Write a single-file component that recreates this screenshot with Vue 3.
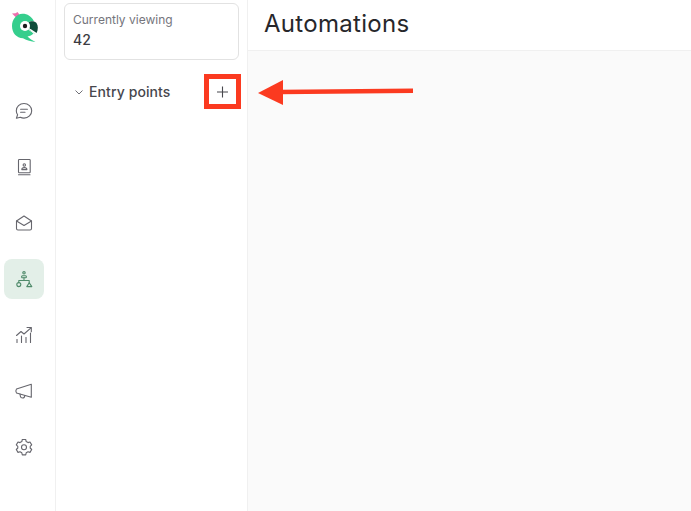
<template>
  <div class="page">
    <nav class="rail">
      <div class="logo">
        <svg width="30" height="32" viewBox="0 0 30 32">
          <path d="M3 2.5 L6.5 2.2 L8.5 1 L10 3 L11 5.5 L7 6.5 L5 4.6 Z" fill="#ee6fae" />
          <path d="M13.5 2.8 C7.5 2.8 3 8.5 3 15 C3 22 7.5 27 14 27.3 C18 29.5 22 30.8 26.5 31 C23.5 29.5 20.5 27.5 18.5 25.5 C21 25 23 24 24.5 22.5 L17 15 C18 11.5 21 9.8 24.8 10 C22.5 5.5 18.5 2.8 13.5 2.8 Z" fill="#35ce8d" />
          <path d="M19.5 11.5 C21.5 9.6 25.5 9.6 27.5 12 C29.3 14.5 29.3 18.5 27.6 22 L20.5 17.2 C19 16 18.6 13 19.5 11.5 Z" fill="#0e4d3a" />
          <circle cx="16" cy="15" r="5" fill="#fff" />
          <circle cx="16" cy="15" r="2.2" fill="#1b1b1b" />
          <path d="M19 18 L26 23" stroke="#d7ece2" stroke-width="1" />
        </svg>
      </div>
      <div class="nav-list">
        <a v-for="item in navItems" :key="item.name" class="nav-item" :class="{ active: item.active }">
          <svg width="20" height="20" viewBox="0 0 20 20" fill="none" stroke="currentColor" stroke-width="1.1" stroke-linecap="round" stroke-linejoin="round">
            <path v-for="d in item.paths" :key="d" :d="d" />
            <circle v-for="c in item.circles" :key="c[0] + '-' + c[1]" :cx="c[0]" :cy="c[1]" :r="c[2]" />
          </svg>
        </a>
      </div>
    </nav>

    <aside class="panel">
      <div class="viewing">
        <div class="viewing-label">Currently viewing</div>
        <div class="viewing-value">42</div>
      </div>
      <div class="section">
        <svg class="chevron" width="10" height="10" viewBox="0 0 10 10" fill="none" stroke="#6f6f76" stroke-width="1">
          <path d="M1.5 3.5 L5 7 L8.5 3.5" />
        </svg>
        <span class="section-title">Entry points</span>
        <button class="add">
          <svg width="14" height="14" viewBox="0 0 14 14" stroke="#47474d" stroke-width="1.1">
            <path d="M6.5 1.5 V12.5 M1 7 H12" />
          </svg>
        </button>
      </div>
    </aside>

    <main class="main">
      <header class="header">
        <h1>Automations</h1>
      </header>
      <div class="canvas"></div>
    </main>

    <svg class="arrow" width="160" height="30" viewBox="0 0 160 30">
      <path d="M155 13.7 L22 15" stroke="#fb3a20" stroke-width="4.6" fill="none" />
      <path d="M0 16 L25 3 V28 Z" fill="#fb3a20" />
    </svg>
  </div>
</template>

<script setup>
const navItems = [
  {
    name: 'chat',
    paths: [
      'M10 2.5 C5.6 2.5 2.3 5.7 2.3 9.7 C2.3 11.2 2.8 12.6 3.6 13.7 L2.4 17.2 L6.3 16.2 C7.4 16.8 8.7 17.1 10 17.1 C14.4 17.1 17.7 13.8 17.7 9.8 C17.7 5.8 14.4 2.5 10 2.5 Z',
      'M6.6 8.2 H13.4',
      'M6.6 11.2 H11',
    ],
  },
  {
    name: 'contacts',
    paths: [
      'M4.5 15 V3.2 C4.5 2.8 4.8 2.5 5.2 2.5 H15.5 C15.9 2.5 16.2 2.8 16.2 3.2 V15 C16.2 15.4 15.9 15.7 15.5 15.7 H5.2 C4.8 15.7 4.5 15.4 4.5 15 Z',
      'M4.5 17.7 H16',
      'M7.8 12.6 C7.8 11.2 8.8 10.6 10.3 10.6 C11.8 10.6 12.9 11.2 12.9 12.6 Z',
    ],
    circles: [[10.3, 8, 1.2]],
  },
  {
    name: 'inbox',
    paths: [
      'M2.5 8 L10 3 L17.5 8 V15.5 C17.5 16.4 16.9 17 16 17 H4 C3.1 17 2.5 16.4 2.5 15.5 Z',
      'M2.5 8 L10 12.5 L17.5 8',
    ],
  },
  {
    name: 'automations',
    active: true,
    paths: [
      'M8.4 6.8 H11.6 C12.2 6.8 12.4 7.2 12.4 7.8 C12.4 8.4 12.2 8.8 11.6 8.8 H8.4 C7.8 8.8 7.6 8.4 7.6 7.8 C7.6 7.2 7.8 6.8 8.4 6.8 Z',
      'M10 8.8 V11.5',
      'M4.8 13.6 V11.5 H15.2 V13.6',
      'M15.2 13.8 L17.8 17.6 H12.8 Z',
    ],
    circles: [[10, 3.8, 1.2], [4.8, 15.6, 2]],
  },
  {
    name: 'reports',
    paths: [
      'M2.5 10.5 L7 6.5 L10 9 L17 2.8',
      'M13 2.5 H17.3 V6.8',
      'M3 14.5 V17.5',
      'M7.5 11 V17.5',
      'M12 12.5 V17.5',
      'M16.5 8 V17.5',
    ],
  },
  {
    name: 'campaigns',
    paths: [
      'M2.5 8 L17.3 3.2 V16.2 L2.5 12 C1.8 11 1.8 9 2.5 8 Z',
      'M6 13 L6.4 15.3 C6.6 16.4 7.4 17 8.6 17 C9.8 17 10.6 16.2 10.8 14.6',
    ],
  },
  {
    name: 'settings',
    paths: [
      'M8.3 2.5 H11.7 L12.2 4.6 L14 5.6 L16 5 L17.7 7.9 L16.2 9.4 V11 L17.7 12.5 L16 15.4 L14 14.8 L12.2 15.8 L11.7 17.9 H8.3 L7.8 15.8 L6 14.8 L4 15.4 L2.3 12.5 L3.8 11 V9.4 L2.3 7.9 L4 5 L6 5.6 L7.8 4.6 Z',
    ],
    circles: [[10, 10.2, 2.5]],
  },
]
</script>

<style>
html,
body {
  margin: 0;
  background: #fff;
}
</style>

<style scoped>
.page {
  position: relative;
  display: flex;
  width: 691px;
  height: 511px;
  overflow: hidden;
  background: #fff;
  font-family: Inter, "Noto Sans", sans-serif;
  color: #38383e;
}

.rail {
  flex: 0 0 55px;
  border-right: 1px solid #f0f0f0;
  display: flex;
  flex-direction: column;
}

.logo {
  height: 91px;
  padding: 11px 0 0 9px;
  box-sizing: border-box;
  display: flex;
  align-items: flex-start;
}

.nav-list {
  display: flex;
  flex-direction: column;
  gap: 16px;
  padding-left: 4px;
}

.nav-item {
  width: 40px;
  height: 40px;
  border-radius: 8px;
  display: flex;
  align-items: center;
  justify-content: center;
  color: #66666d;
}

.nav-item.active {
  background: #e3efe8;
  color: #4f8a6a;
}

.panel {
  flex: 0 0 192px;
  border-right: 1px solid #f0f0f0;
  padding: 3px 8px 0;
  box-sizing: border-box;
}

.viewing {
  height: 57px;
  box-sizing: border-box;
  border: 1px solid #e2e2e2;
  border-radius: 6px;
  padding: 8px 8px;
}

.viewing-label {
  font-size: 12px;
  line-height: 16px;
  color: #75757c;
}

.viewing-value {
  margin-top: 3px;
  font-size: 14px;
  line-height: 18px;
  font-weight: 500;
  color: #3c3c42;
}

.section {
  position: relative;
  display: flex;
  align-items: center;
  height: 35px;
  margin-top: 14px;
  padding-left: 10px;
}

.chevron {
  margin-right: 5px;
}

.section-title {
  font-size: 14px;
  font-weight: 500;
  letter-spacing: 0.1px;
  color: #47474d;
}

.add {
  position: absolute;
  left: 140px;
  top: 0;
  width: 37px;
  height: 35px;
  box-sizing: border-box;
  padding: 0;
  background: #fff;
  border: 5px solid #fb3a20;
  display: flex;
  align-items: center;
  justify-content: center;
}

.main {
  flex: 1;
  display: flex;
  flex-direction: column;
}

.header {
  height: 50px;
  flex: none;
  box-sizing: border-box;
  padding: 0 0 3px 16px;
  display: flex;
  align-items: center;
}

.header h1 {
  margin: 0;
  font-size: 24px;
  font-weight: 400;
  letter-spacing: 0.3px;
  color: #27272b;
}

.canvas {
  flex: 1;
  background: #fafafa;
  border-top: 1px solid #f0f0f0;
}

.arrow {
  position: absolute;
  left: 258px;
  top: 77px;
}
</style>
